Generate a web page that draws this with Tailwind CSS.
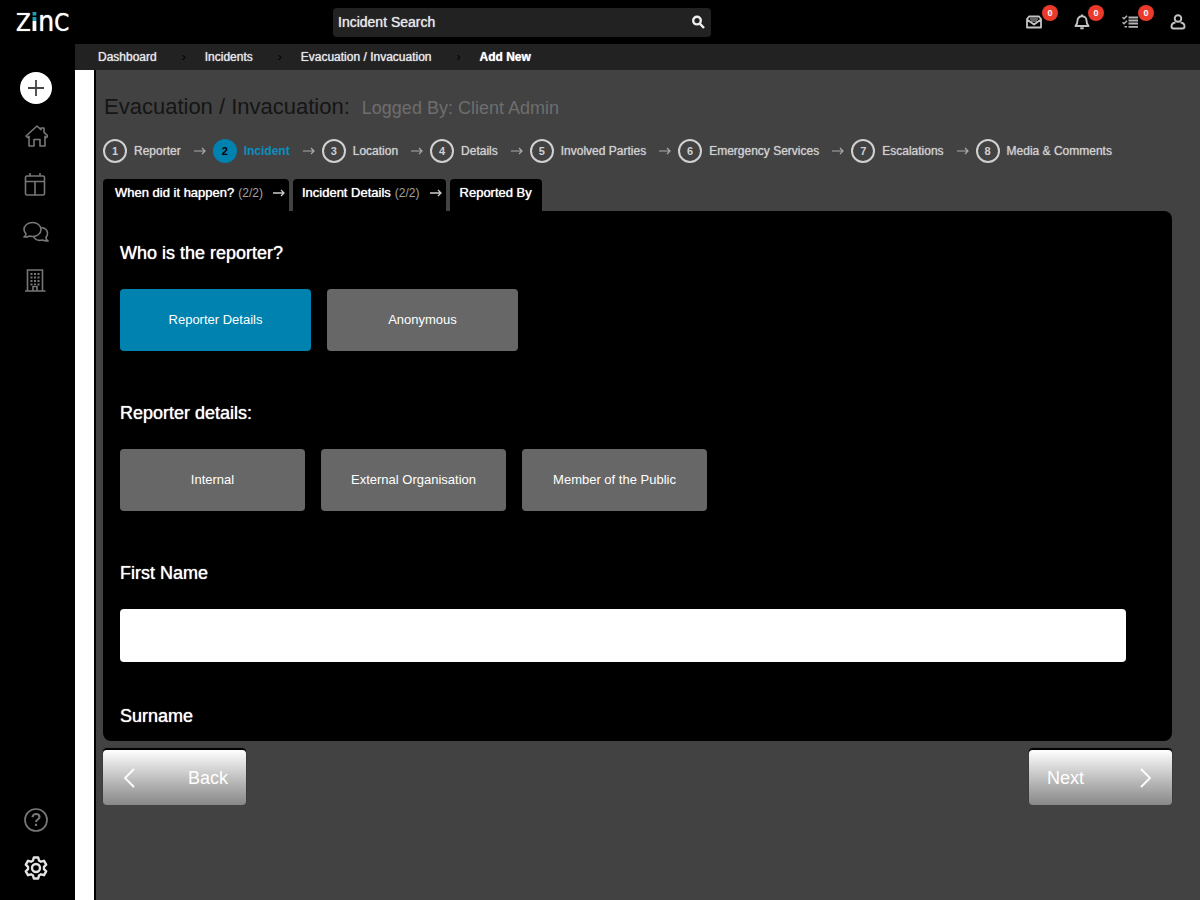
<!DOCTYPE html>
<html lang="en">
<head>
    <meta charset="UTF-8">
    <meta name="viewport" content="width=device-width, initial-scale=1.0">
    <title>Evacuation / Invacuation | Zinc</title>
    <script src="https://cdn.jsdelivr.net/npm/@tailwindcss/browser@4"></script>
</head>
<body class="bg-black h-screen flex flex-col overflow-hidden text-white font-['Liberation_Sans',Arial,sans-serif]">

    <!-- Top bar -->
    <header class="h-11 shrink-0 flex items-center pl-4 pr-3.5">
        <a href="#" aria-label="Zinc" class="w-[317px] flex items-baseline leading-9 text-2xl text-shadow-[0_0_1px_#fff] font-['DejaVu_Sans_Condensed','DejaVu_Sans',sans-serif]">
            <span>Z</span>
            <span class="text-shadow-none bg-linear-to-b from-[#1aa3b8] from-45% to-white to-45% bg-clip-text text-transparent font-bold">i</span>
            <span class="text-[28px]">n</span>
            <span>C</span>
        </a>

        <form class="w-[378px] h-[29px] flex items-center bg-[#222222] rounded-sm pl-[5px] pr-1.5">
            <input type="search" aria-label="Incident Search" placeholder="Incident Search"
                class="flex-1 min-w-0 text-sm bg-transparent placeholder:text-gray-200 text-shadow-[0_0_1px_#ddd] focus:outline-none">
            <button type="submit" aria-label="Search">
                <svg class="w-3.5 h-3.5" viewBox="0 0 14 14" fill="none" stroke="#eee" stroke-width="2.4"><circle cx="6" cy="5.6" r="3.8"/><path d="M8.8 8.6 13 13"/></svg>
            </button>
        </form>

        <nav class="ml-auto flex gap-8">
            <button aria-label="Messages" class="relative w-4 h-4">
                <svg class="w-4 h-4" viewBox="0 0 16 16" fill="none" stroke="#c4c4c4" stroke-width="1.8" stroke-linejoin="round"><path d="M1 5 3 2.500h10L15 5v8.500H1zM1 5.500l7 5 7-5"/><path d="M4 5h8M5 7h6" stroke-width="1.2"/></svg>
                <span class="absolute -top-[9px] left-4 w-4 h-4 rounded-full bg-[#ea3a2b] text-[9px] leading-4 font-bold">0</span>
            </button>
            <button aria-label="Notifications" class="relative w-4 h-4">
                <svg class="w-4 h-4" viewBox="0 0 16 16" fill="none" stroke="#c4c4c4" stroke-width="1.9" stroke-linejoin="round"><path d="M8 .5v2M1.500 12c2-2 2-3 2-5.500C3.500 4 5.500 2.300 8 2.300S12.500 4 12.500 6.500c0 2.500 0 3.500 2 5.500zM6.300 14.300h3.400"/></svg>
                <span class="absolute -top-[9px] left-3.5 w-4 h-4 rounded-full bg-[#ea3a2b] text-[9px] leading-4 font-bold">0</span>
            </button>
            <button aria-label="Tasks" class="relative w-4 h-4">
                <svg class="w-4 h-4" viewBox="0 0 16 16" fill="none" stroke="#b4b4b4" stroke-width="1.8"><path d="M6.500 3.500H16M6.500 6.500H16M6.500 9.500H16M6.500 12.800H16"/><path d="m.5 3.300 1.500 1.500 3-3M.5 8.300 2 9.800l3-3M2.500 12.800H5" stroke-width="1.500"/></svg>
                <span class="absolute -top-[9px] left-4 w-4 h-4 rounded-full bg-[#ea3a2b] text-[9px] leading-4 font-bold">0</span>
            </button>
            <button aria-label="Account" class="w-4 h-4">
                <svg class="w-4 h-4" viewBox="0 0 16 16" fill="none" stroke="#c4c4c4" stroke-width="1.9"><circle cx="8" cy="4.500" r="3.300"/><path d="M5.500 8.500C3 8.800 1.500 10 1.500 12.500c0 1.200.8 2 2 2h9c1.200 0 2-.8 2-2 0-2.500-1.500-3.700-4-4"/></svg>
            </button>
        </nav>
    </header>

    <div class="flex-1 min-h-0 flex">
        <!-- Side menu -->
        <aside class="w-[75px] shrink-0 flex flex-col items-center pr-1 pt-7 pb-5 text-[#777777]">
            <button aria-label="Add new" class="w-8 h-8 mb-5 flex items-center justify-center rounded-full bg-white text-[#444444]">
                <svg class="w-5 h-5" viewBox="0 0 20 20" stroke="currentColor" stroke-width="1.8"><path d="M10 2v16M2 10h16"/></svg>
            </button>
            <nav class="flex flex-col items-center gap-6">
                <a href="#" aria-label="Home"><svg class="w-6 h-6" viewBox="0 0 24 24" fill="none" stroke="currentColor" stroke-width="1.6" stroke-linejoin="round"><path d="M2 12 13 2l4 3.600V4h3v4.300L24 12l-1.500 1.500-1.500-1.200V22h-5v-6.500h-6V22H5v-9.700l-1.500 1.200z"/></svg></a>
                <a href="#" aria-label="Calendar"><svg class="w-6 h-6" viewBox="0 0 24 24" fill="none" stroke="currentColor" stroke-width="1.6"><rect x="1.500" y="4" width="19" height="19" rx="1.500"/><path d="M1.500 9.500h19M11 9.500V23M6 1v3M16 1v3"/></svg></a>
                <a href="#" aria-label="Chat"><svg class="w-[26px] h-6" viewBox="0 0 26 24" fill="none" stroke="currentColor" stroke-width="1.6" stroke-linejoin="round"><path d="M1 17c1.500-1 2-2 2-3.300C1.800 12.500 1 11 1 9.500 1 5.500 4.800 2.500 9.500 2.500S18 5.500 18 9.500s-3.800 7-8.500 7c-1 0-2-.2-3-.5-1.500.8-3 1.300-5.500 1z"/><path d="M18.500 7.500c3.500.6 6 3 6 6 0 1.500-.6 2.800-1.600 3.900 0 1.300.6 2.600 2.100 3.600-2.500.3-4-.3-5.500-1-4 1-7.500-.5-9-3.500"/></svg></a>
                <a href="#" aria-label="Sites"><svg class="w-6 h-6" viewBox="0 0 24 24" fill="none" stroke="currentColor" stroke-width="1.6"><path d="M3.500 23V2h15v21M1 23h20.500M9 23v-4.500h4V23"/><path d="M7.500 5v13M11 5v12M14.500 5v13" stroke-width="2" stroke-dasharray="2 1.500"/></svg></a>
            </nav>
            <nav class="mt-auto flex flex-col items-center gap-6">
                <a href="#" aria-label="Help"><svg class="w-6 h-6" viewBox="0 0 24 24" fill="none" stroke="currentColor" stroke-width="1.7"><circle cx="12" cy="12" r="11"/><path d="M8.500 9.300c0-2 1.500-3.300 3.500-3.300s3.500 1.200 3.500 3c0 2.500-3.500 2.500-3.500 5M12 15.800v2.200" stroke-width="2.100"/></svg></a>
                <a href="#" aria-label="Settings" class="text-[#e4e4e4]"><svg class="w-6 h-6" viewBox="0 0 24 24" fill="none" stroke="currentColor" stroke-width="2.4" stroke-linejoin="round"><path d="M9.800 1.500h4.400l.8 3 2 1.200 3-.9 2.200 3.800-2.200 2.200v2.400l2.200 2.200-2.200 3.800-3-.9-2 1.200-.8 3H9.800l-.8-3-2-1.200-3 .9-2.200-3.800L4 13.200v-2.400L1.800 8.600 4 4.800l3 .9 2-1.200z"/><circle cx="12" cy="12" r="4"/></svg></a>
            </nav>
        </aside>

        <div class="flex-1 min-w-0 flex flex-col">
            <nav aria-label="Breadcrumb" class="h-[26px] shrink-0 flex items-center bg-[#222222] pl-[23px] text-xs text-gray-200 text-shadow-[0_0_1px_#ddd]">
                <a href="#">Dashboard</a>
                <span class="w-12 pl-1.5 text-center text-black text-shadow-none">›</span>
                <a href="#">Incidents</a>
                <span class="w-12 pl-1.5 text-center text-black text-shadow-none">›</span>
                <a href="#">Evacuation / Invacuation</a>
                <span class="w-12 pl-1.5 text-center text-black text-shadow-none">›</span>
                <span class="font-bold text-white">Add New</span>
            </nav>

            <main class="flex-1 min-h-0 flex flex-col bg-[#424242] border-l-[19px] border-white">
                <div class="flex-1 min-h-0 flex flex-col border-l-2 border-black pl-[7px] pr-7 pb-[95px]">
                    <div class="flex items-baseline gap-3 pt-[22px] pl-px">
                        <h1 class="text-[22px] leading-[30px] text-[#151515]">Evacuation / Invacuation:</h1>
                        <p class="text-lg leading-[30px] text-[#6e6e6e]">Logged By: Client Admin</p>
                    </div>

                    <!-- Steps -->
                    <ol id="steps" class="flex items-center h-6 mt-4 text-xs text-[#d0d0d0] whitespace-nowrap"></ol>

                    <!-- Tabs -->
                    <div class="flex gap-1 mt-4 text-[13px] leading-4">
                        <button class="flex items-center h-8 pl-3 pr-1 pb-1 rounded-t bg-black">
                            <span class="text-shadow-[0_0_1px_#fff]">When did it happen?</span>
                            <span class="ml-1 mr-2.5 text-xs text-neutral-400">(2/2)</span>
                            <svg class="w-3 h-3" viewBox="0 0 12 12" fill="none" stroke="#ccc" stroke-width="1.3"><path d="M0 6h11M8 3l3 3-3 3"/></svg>
                        </button>
                        <button class="flex items-center h-8 pl-[9px] pr-1 pb-1 rounded-t bg-black">
                            <span class="text-shadow-[0_0_1px_#fff]">Incident Details</span>
                            <span class="ml-1 mr-2.5 text-xs text-neutral-400">(2/2)</span>
                            <svg class="w-3 h-3" viewBox="0 0 12 12" fill="none" stroke="#ccc" stroke-width="1.3"><path d="M0 6h11M8 3l3 3-3 3"/></svg>
                        </button>
                        <button class="flex items-center h-8 px-2.5 pb-1 rounded-t bg-black">
                            <span class="text-shadow-[0_0_1px_#fff]">Reported By</span>
                        </button>
                    </div>

                    <!-- Form -->
                    <form class="flex-1 min-h-0 overflow-y-auto [scrollbar-width:none] bg-black rounded-lg rounded-tl-none pl-[17px] pr-[46px] pt-7 pb-3">
                        <h2 class="text-lg text-shadow-[0_0_1px_#fff]">Who is the reporter?</h2>
                        <div class="flex gap-4 mt-[22px] text-[13px] text-shadow-[0_0_1px_#fff]">
                            <button type="button" class="w-[191px] h-[62px] rounded-sm bg-[#0082b0]">Reporter Details</button>
                            <button type="button" class="w-[191px] h-[62px] rounded-sm bg-[#676767]">Anonymous</button>
                        </div>

                        <h2 class="mt-12 text-lg text-shadow-[0_0_1px_#fff]">Reporter details:</h2>
                        <div class="flex gap-4 mt-[22px] text-[13px] text-shadow-[0_0_1px_#fff]">
                            <button type="button" class="w-[185px] h-[62px] rounded-sm bg-[#676767]">Internal</button>
                            <button type="button" class="w-[185px] h-[62px] rounded-sm bg-[#676767]">External Organisation</button>
                            <button type="button" class="w-[185px] h-[62px] rounded-sm bg-[#676767]">Member of the Public</button>
                        </div>

                        <label for="firstName" class="block mt-12 text-lg text-shadow-[0_0_1px_#fff]">First Name</label>
                        <input type="text" id="firstName" name="firstName"
                            class="block w-full h-[53px] mt-[22px] px-4 rounded-sm bg-white text-black text-lg">

                        <label for="surname" class="block mt-10 text-lg text-shadow-[0_0_1px_#fff]">Surname</label>
                        <input type="text" id="surname" name="surname"
                            class="block w-full h-[53px] mt-[22px] px-4 rounded-sm bg-white text-black text-lg">
                    </form>

                    <div class="flex justify-between mt-[9px] text-lg">
                        <button class="w-[143px] h-[55px] flex items-center justify-between pl-5 pr-[18px] rounded-sm bg-linear-to-b from-white to-[#888888] shadow-[0_-2px_1px_#000]">
                            <svg class="w-3 h-5" viewBox="0 0 12 20" fill="none" stroke="#fff" stroke-width="1.8"><path d="m11 1-9 9 9 9"/></svg>
                            Back
                        </button>
                        <button class="w-[143px] h-[55px] flex items-center justify-between pl-[18px] pr-5 rounded-sm bg-linear-to-b from-white to-[#888888] shadow-[0_-2px_1px_#000]">
                            Next
                            <svg class="w-3 h-5" viewBox="0 0 12 20" fill="none" stroke="#fff" stroke-width="1.8"><path d="m1 1 9 9-9 9"/></svg>
                        </button>
                    </div>
                </div>
            </main>
        </div>
    </div>

    <script>
        const steps = ['Reporter', 'Incident', 'Location', 'Details', 'Involved Parties', 'Emergency Services', 'Escalations', 'Media & Comments'];
        const current = 1;

        document.getElementById('steps').innerHTML = steps.map((step, i) => {
            const circle = i === current ? 'bg-[#0082b0] border-[#0082b0] text-black' : 'border-[#d0d0d0]';
            const label = i === current ? 'text-[#0a8fc0] font-bold' : 'text-shadow-[0_0_1px_#bbb]';
            const arrow = i < steps.length - 1
                ? '<svg class="w-3 h-3 ml-[13px] mr-[7px]" viewBox="0 0 12 12" fill="none" stroke="#aaa" stroke-width="1.2"><path d="M0 6h11M8 3l3 3-3 3"/></svg>'
                : '';
            return `<li class="flex items-center">
                <a href="#" class="flex items-center gap-[7px]">
                    <span class="w-6 h-6 flex items-center justify-center rounded-full border-2 font-bold text-[11px] ${circle}">${i + 1}</span>
                    <span class="${label}">${step.replace('&', '&amp;')}</span>
                </a>${arrow}
            </li>`;
        }).join('');
    </script>
</body>
</html>
